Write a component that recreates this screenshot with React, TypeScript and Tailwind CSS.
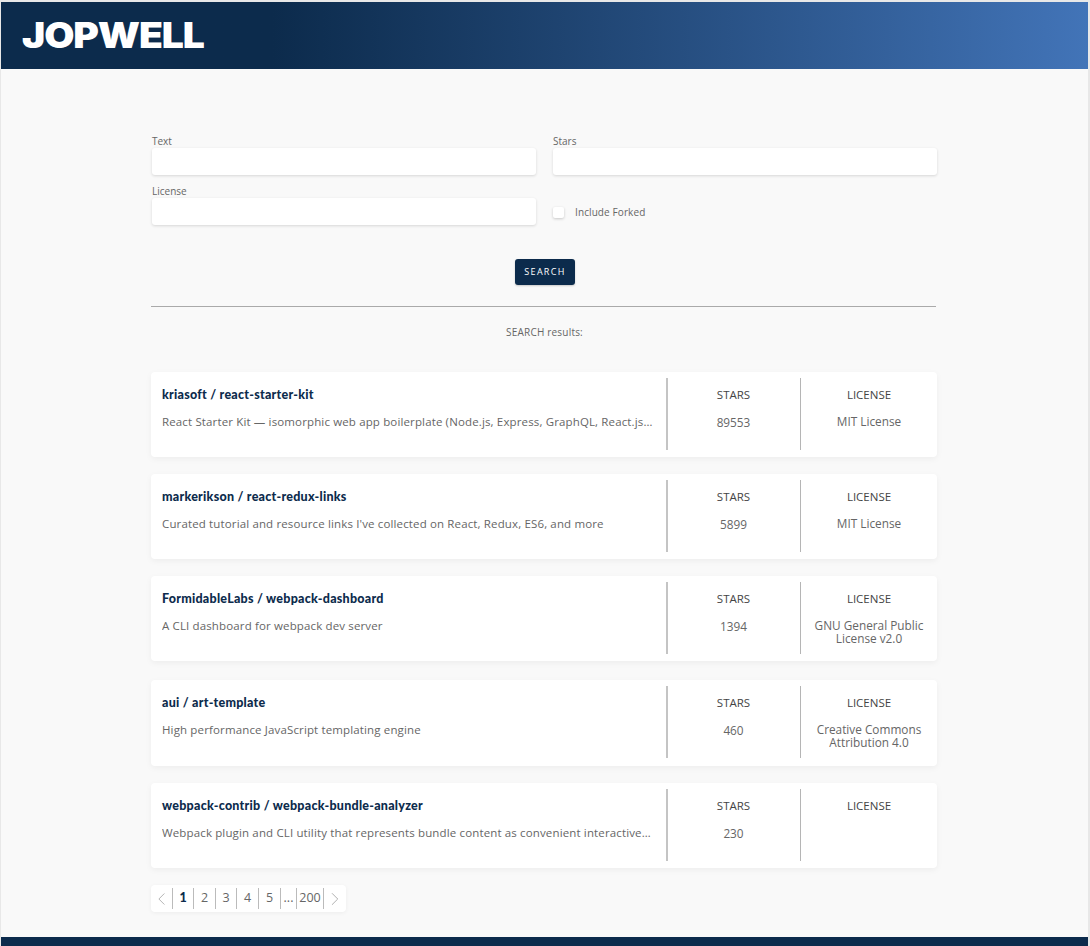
import React from 'react';
import {ChevronLeft, ChevronRight} from 'lucide-react';

type Repo = {
    title: string;
    description: string;
    stars: string;
    license: string[];
    height: string;
    margin: string;
};

const repos: Repo[] = [
    {title: 'kriasoft / react-starter-kit', description: 'React Starter Kit — isomorphic web app boilerplate (Node.js, Express, GraphQL, React.js, Babel, PostCSS)', stars: '89553', license: ['MIT License'], height: 'h-[85px]', margin: 'mb-[17px]'},
    {title: 'markerikson / react-redux-links', description: "Curated tutorial and resource links I've collected on React, Redux, ES6, and more", stars: '5899', license: ['MIT License'], height: 'h-[85px]', margin: 'mb-[17px]'},
    {title: 'FormidableLabs / webpack-dashboard', description: 'A CLI dashboard for webpack dev server', stars: '1394', license: ['GNU General Public', 'License v2.0'], height: 'h-[85px]', margin: 'mb-[19px]'},
    {title: 'aui / art-template', description: 'High performance JavaScript templating engine', stars: '460', license: ['Creative Commons', 'Attribution 4.0'], height: 'h-[86px]', margin: 'mb-[17px]'},
    {title: 'webpack-contrib / webpack-bundle-analyzer', description: 'Webpack plugin and CLI utility that represents bundle content as convenient interactive zoomable treemap', stars: '230', license: [], height: 'h-[85px]', margin: 'mb-[17px]'},
];

const pages = ['1', '2', '3', '4', '5', '...', '200'];
const pageWidths = ['w-[21px]', 'w-[22px]', 'w-[21px]', 'w-[22px]', 'w-[22px]', 'w-[16px]', 'w-[27px]'];

const Field = ({label}: {label: string}) => (
    <label className="block">
        <span className="block h-[14px] text-[10px] leading-[14px] text-[#666]">{label}</span>
        <input className="block w-full h-[27px] rounded-[3px] bg-white shadow-[0_1px_3px_rgba(0,0,0,0.14)] outline-none" />
    </label>
);

const RepoCard = ({repo}: {repo: Repo}) => (
    <div className={`flex ${repo.height} ${repo.margin} pt-[6px] bg-white rounded-[4px] shadow-[0_2px_6px_rgba(0,0,0,0.05)]`}>
        <div className="w-[517px] pl-[11px] pr-[13px] border-r-2 border-[#c4c4c4] h-[72px]">
            <div className="mt-[10px] text-[12.5px] leading-[14px] font-['Lato',sans-serif] font-black tracking-[0.25px] text-[#0c2b4c]">{repo.title}</div>
            <div className="mt-[13px] text-[11.5px] leading-[14px] tracking-[0.14px] text-[#666] truncate">{repo.description}</div>
        </div>
        <div className="w-[133px] h-[72px] pr-[1px] border-r border-[#b5b5b5] text-center">
            <div className="mt-[10px] text-[11.5px] leading-[14px] text-[#444]">STARS</div>
            <div className="mt-[13px] text-[11.8px] leading-[14px] text-[#666]">{repo.stars}</div>
        </div>
        <div className="flex-1 h-[72px] text-center">
            <div className="mt-[10px] text-[11.5px] leading-[14px] text-[#444]">LICENSE</div>
            <div className="mt-[13px] text-[11.8px] leading-[13px] text-[#666]">
                {repo.license.map((line) => (
                    <div key={line}>{line}</div>
                ))}
            </div>
        </div>
    </div>
);

const Pagination = () => (
    <div className="flex items-center w-[195px] h-[27px] rounded-[4px] bg-white shadow-[0_1px_4px_rgba(0,0,0,0.05)]">
        <div className="flex justify-center w-[21px]">
            <ChevronLeft size={22} strokeWidth={1} className="text-[#aaa]" />
        </div>
        {pages.map((page, index) => (
            <div
                key={page}
                className={`${pageWidths[index]} h-[21px] border-l border-[#bbb] flex items-center justify-center text-[12.5px] ${index === 0 ? "font-['Lato',sans-serif] font-black text-[#0c2b4c]" : 'text-[#666]'}`}
            >
                {page}
            </div>
        ))}
        <div className="flex justify-center flex-1 h-[21px] items-center border-l border-[#bbb]">
            <ChevronRight size={22} strokeWidth={1} className="text-[#aaa]" />
        </div>
    </div>
);

export default function App() {
    return (
        <div className="h-[946px] overflow-hidden bg-[#e8e8e8] pt-[2px] pl-[1px] pr-[2px] font-['Open_Sans',sans-serif]">
            <header className="h-[67px] pl-[21px] flex items-center bg-gradient-to-r from-[#0c2b4c] from-[25%] to-[#4274b8]">
                <span className="block origin-left scale-x-[1.115] font-['Inter',sans-serif] font-black text-white text-[35px] leading-none tracking-[-1px]">JOPWELL</span>
            </header>
            <main className="h-[868px] bg-[#f9f9f9] px-[150px] pt-[65px]">
                <div className="ml-[1px] grid grid-cols-[384px_384px] gap-x-[17px] gap-y-[9px]">
                    <Field label="Text" />
                    <Field label="Stars" />
                    <Field label="License" />
                    <label className="flex items-center pt-[15px] gap-[11px] text-[10px] tracking-[0.1px] text-[#666]">
                        <span className="block w-[11px] h-[11px] rounded-[2px] bg-white shadow-[0_1px_3px_rgba(0,0,0,0.2)]" />
                        Include Forked
                    </label>
                </div>
                <div className="flex justify-center mt-[34px] w-[788px]">
                    <button className="w-[60px] h-[26px] rounded-[3px] bg-[#0c2b4c] text-white text-[9px] tracking-[1.3px] shadow-[0_1px_2px_rgba(0,0,0,0.2)]">SEARCH</button>
                </div>
                <hr className="mt-[21px] w-[785px] border-t border-[#aaa]" />
                <p className="mt-[18px] w-[787px] text-center text-[10px] leading-[14px] tracking-[0.2px] text-[#666]">SEARCH results:</p>
                <div className="mt-[33px] w-[786px]">
                    {repos.map((repo) => (
                        <RepoCard key={repo.title} repo={repo} />
                    ))}
                    <Pagination />
                </div>
            </main>
            <footer className="h-[9px] bg-[#0c2b4c]" />
        </div>
    );
}
